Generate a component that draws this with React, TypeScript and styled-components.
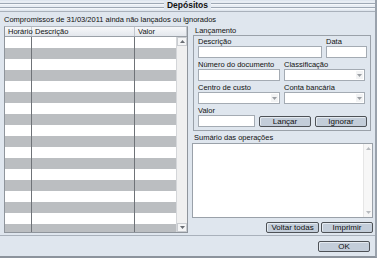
import styled, {createGlobalStyle} from 'styled-components'

const Global = createGlobalStyle`
    html, body {
        margin: 0;
        padding: 0;
        background: #dfe6ee;
    }
    * {
        box-sizing: border-box;
    }
`

const Window = styled.div`
    width: 377px;
    height: 258px;
    display: flex;
    flex-direction: column;
    background: #dfe6ee;
    border-right: 2px solid #9aa2ac;
    border-bottom: 2px solid #8c939c;
    font-family: 'Liberation Sans', Arial, sans-serif;
    font-size: 7.5px;
    color: #111;
    overflow: hidden;
`
const TitleBar = styled.div`
    height: 12px;
    flex: none;
    display: flex;
    align-items: center;
    justify-content: center;
    border-bottom: 1px solid #a9b1bb;
    background: repeating-linear-gradient(to bottom, #e8edf3 0 2px, #9ea8b4 2px 3px, #f4f7fa 3px 4px) 0 1px / 100% 9px no-repeat, #dfe6ee;
`
const Title = styled.span`
    background: #dfe6ee;
    padding: 0 3px;
    font-weight: bold;
    font-size: 8.5px;
    line-height: 11px;
`
const Body = styled.div`
    flex: 1;
    min-height: 0;
    display: flex;
    gap: 4px;
    padding: 3px 4px 2px 4px;
    border-bottom: 1px solid #a9b1bb;
`
const LeftPane = styled.div`
    width: 184px;
    min-height: 0;
    display: flex;
    flex-direction: column;
`
const Caption = styled.div`
    height: 11px;
    flex: none;
    line-height: 9px;
    white-space: nowrap;
`
const ListBox = styled.div`
    flex: 1;
    min-height: 0;
    display: flex;
    flex-direction: column;
    border: 1px solid #8f959c;
    border-top-color: #b0b6bd;
    background: #fff;
    overflow: hidden;
`
const Header = styled.div`
    height: 10px;
    flex: none;
    display: flex;
    background: linear-gradient(#f7f8fa, #e3e7ec);
    border-bottom: 1px solid #9aa0a7;
`
const HeadCell = styled.div<{$w: number}>`
    width: ${p => p.$w}px;
    flex: none;
    padding-left: 3px;
    line-height: 9px;
    border-right: 1px solid #c2c7cd;
`
const ListInner = styled.div`
    flex: 1;
    min-height: 0;
    display: flex;
    overflow: hidden;
`
const Rows = styled.div`
    flex: 1;
    overflow: hidden;
`
const Row = styled.div<{$odd: boolean}>`
    height: 11px;
    display: flex;
    background: ${p => (p.$odd ? '#bbbec1' : '#ffffff')};
`
const Cell = styled.div<{$w: number}>`
    width: ${p => p.$w}px;
    flex: none;
    border-right: 1px solid #6f7378;
    &:last-child {
        flex: 1;
        border-right: none;
    }
`
const ScrollBar = styled.div<{$light?: boolean}>`
    width: ${p => (p.$light ? 9 : 11)}px;
    flex: none;
    display: flex;
    flex-direction: column;
    justify-content: space-between;
    background: ${p => (p.$light ? '#f7f7f7' : '#f0f0f0')};
    border-left: 1px solid ${p => (p.$light ? '#e6e6e6' : '#d4d6d9')};
`
const Arrow = styled.div<{$light?: boolean}>`
    height: 9px;
    display: flex;
    align-items: center;
    justify-content: center;
    background: ${p => (p.$light ? 'transparent' : '#f4f5f6')};
    border: ${p => (p.$light ? 'none' : '1px solid #c9ccd0')};
    svg {
        display: block;
    }
`
const RightPane = styled.div`
    flex: 1;
    min-height: 0;
    display: flex;
    flex-direction: column;
    padding-top: 11px;
`
const GroupLabel = styled.div`
    line-height: 9px;
    padding-left: 3px;
`
const GroupBox = styled.div`
    border: 1px solid #9aa1a9;
    margin: 0 2px 0 1px;
    padding: 2px 3px 3px 4px;
    display: flex;
    flex-direction: column;
    gap: 3px;
`
const FieldRow = styled.div`
    display: flex;
    align-items: flex-end;
    gap: 4px;
`
const Field = styled.div<{$w: number}>`
    width: ${p => p.$w}px;
    display: flex;
    flex-direction: column;
`
const FieldLabel = styled.label`
    line-height: 8px;
    white-space: nowrap;
`
const TextBox = styled.div`
    height: 12px;
    background: #fff;
    border: 1px solid #a4abb3;
`
const Select = styled.div`
    height: 12px;
    background: #fff;
    border: 1px solid #a4abb3;
    display: flex;
    justify-content: flex-end;
    padding: 1px;
`
const SelectBtn = styled.div`
    width: 7px;
    background: #f2f3f4;
    display: flex;
    align-items: center;
    justify-content: center;
`
const Button = styled.button<{$w: number}>`
    width: ${p => p.$w}px;
    height: 11px;
    padding: 0;
    font-family: 'Liberation Sans', Arial, sans-serif;
    font-size: 8px;
    line-height: 9px;
    color: #111;
    background: #c3cdd9;
    border: 1px solid #4e5257;
    border-radius: 2px;
    box-shadow: inset 1px 1px 0 #e4eaf0;
`
const SumLabel = styled.div`
    margin-top: 2px;
    line-height: 9px;
    padding-left: 2px;
`
const SumBox = styled.div`
    height: 78px;
    margin-top: 1px;
    background: #fff;
    border: 1px solid #9aa1a9;
    display: flex;
    justify-content: flex-end;
`
const BtnRow = styled.div`
    display: flex;
    justify-content: flex-end;
    gap: 2px;
    margin-top: 4px;
`
const Footer = styled.div`
    height: 20px;
    flex: none;
    display: flex;
    justify-content: flex-end;
    align-items: center;
    padding-right: 5px;
`

const Tri = ({up, c = '#6a6e73'}: {up?: boolean; c?: string}) => (
    <svg width="5" height="3" viewBox="0 0 5 3">
        <path d={up ? 'M0 3 L2.5 0 L5 3 Z' : 'M0 0 L5 0 L2.5 3 Z'} fill={c} />
    </svg>
)

const cols = [27, 103, 40]

function App() {
    const rows = Array.from({length: 19}, (_, i) => i)
    return (
        <Window>
            <Global />
            <TitleBar>
                <Title>Depósitos</Title>
            </TitleBar>
            <Body>
                <LeftPane>
                    <Caption>Compromissos de 31/03/2011 ainda não lançados ou ignorados</Caption>
                    <ListBox>
                        <Header>
                            <HeadCell $w={27}>Horário</HeadCell>
                            <HeadCell $w={103}>Descrição</HeadCell>
                            <HeadCell $w={52}>Valor</HeadCell>
                        </Header>
                        <ListInner>
                            <Rows>
                                {rows.map(i => (
                                    <Row key={i} $odd={i % 2 === 1}>
                                        {cols.map((w, j) => (
                                            <Cell key={j} $w={w} />
                                        ))}
                                    </Row>
                                ))}
                            </Rows>
                            <ScrollBar>
                                <Arrow>
                                    <Tri up />
                                </Arrow>
                                <Arrow>
                                    <Tri />
                                </Arrow>
                            </ScrollBar>
                        </ListInner>
                    </ListBox>
                </LeftPane>
                <RightPane>
                    <GroupLabel>Lançamento</GroupLabel>
                    <GroupBox>
                        <FieldRow>
                            <Field $w={124}>
                                <FieldLabel>Descrição</FieldLabel>
                                <TextBox />
                            </Field>
                            <Field $w={41}>
                                <FieldLabel>Data</FieldLabel>
                                <TextBox />
                            </Field>
                        </FieldRow>
                        <FieldRow>
                            <Field $w={82}>
                                <FieldLabel>Número do documento</FieldLabel>
                                <TextBox />
                            </Field>
                            <Field $w={81}>
                                <FieldLabel>Classificação</FieldLabel>
                                <Select>
                                    <SelectBtn>
                                        <Tri c="#9a9ea3" />
                                    </SelectBtn>
                                </Select>
                            </Field>
                        </FieldRow>
                        <FieldRow>
                            <Field $w={82}>
                                <FieldLabel>Centro de custo</FieldLabel>
                                <Select>
                                    <SelectBtn>
                                        <Tri c="#9a9ea3" />
                                    </SelectBtn>
                                </Select>
                            </Field>
                            <Field $w={81}>
                                <FieldLabel>Conta bancária</FieldLabel>
                                <Select>
                                    <SelectBtn>
                                        <Tri c="#9a9ea3" />
                                    </SelectBtn>
                                </Select>
                            </Field>
                        </FieldRow>
                        <FieldRow>
                            <Field $w={57}>
                                <FieldLabel>Valor</FieldLabel>
                                <TextBox />
                            </Field>
                            <Button $w={52}>Lançar</Button>
                            <Button $w={52}>Ignorar</Button>
                        </FieldRow>
                    </GroupBox>
                    <SumLabel>Sumário das operações</SumLabel>
                    <SumBox>
                        <ScrollBar $light>
                            <Arrow $light>
                                <Tri up c="#b8bbbf" />
                            </Arrow>
                            <Arrow $light>
                                <Tri c="#b8bbbf" />
                            </Arrow>
                        </ScrollBar>
                    </SumBox>
                    <BtnRow>
                        <Button $w={53}>Voltar todas</Button>
                        <Button $w={52}>Imprimir</Button>
                    </BtnRow>
                </RightPane>
            </Body>
            <Footer>
                <Button $w={52}>OK</Button>
            </Footer>
        </Window>
    )
}

export default App
